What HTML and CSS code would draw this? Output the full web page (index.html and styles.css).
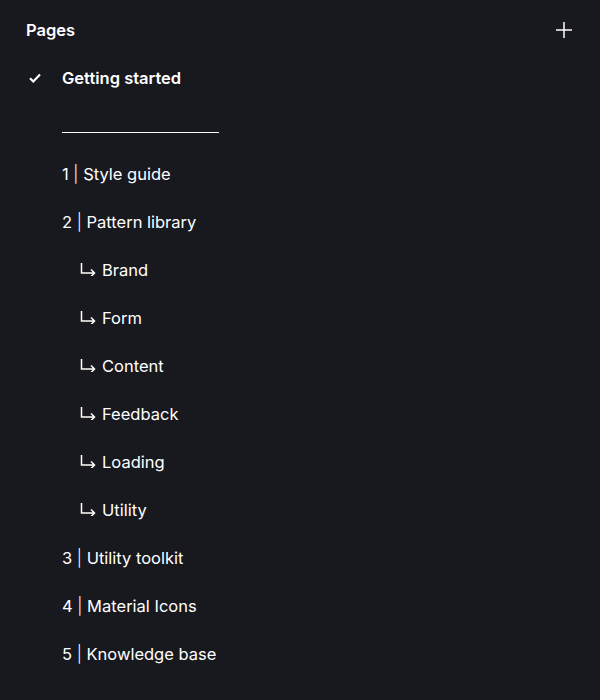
FILE: index.html
```html
<!DOCTYPE html>
<html>
<head>
<meta charset="utf-8">
<link rel="stylesheet" href="styles.css">
</head>
<body>
<div class="panel">
  <div class="header">
    <span class="title">Pages</span>
    <svg class="plus" width="18" height="18" viewBox="0 0 18 18"><path d="M9 1v16M1 9h16" stroke="#fff" stroke-width="1.5" fill="none"/></svg>
  </div>
  <ul class="list">
    <li class="item current">
      <span class="check"><svg width="16" height="16" viewBox="0 0 16 16"><path d="M3 8.3l3.3 3.2 6.7-7" stroke="#fff" stroke-width="2.2" fill="none"/></svg></span>
      <span class="label">Getting started</span>
    </li>
    <li class="item"><span class="sep"></span></li>
    <li class="item"><span class="label">1 <span class="bar">|</span> Style guide</span></li>
    <li class="item"><span class="label">2 <span class="bar">|</span> Pattern library</span></li>
    <li class="item sub"><svg class="arr" width="17" height="14" viewBox="0 0 17 14"><path d="M1.5 1v10h13M11 7.5l3.5 3.5-3.5 3.5" stroke="#fff" stroke-width="1.5" fill="none"/></svg><span class="label">Brand</span></li>
    <li class="item sub"><svg class="arr" width="17" height="14" viewBox="0 0 17 14"><path d="M1.5 1v10h13M11 7.5l3.5 3.5-3.5 3.5" stroke="#fff" stroke-width="1.5" fill="none"/></svg><span class="label">Form</span></li>
    <li class="item sub"><svg class="arr" width="17" height="14" viewBox="0 0 17 14"><path d="M1.5 1v10h13M11 7.5l3.5 3.5-3.5 3.5" stroke="#fff" stroke-width="1.5" fill="none"/></svg><span class="label">Content</span></li>
    <li class="item sub"><svg class="arr" width="17" height="14" viewBox="0 0 17 14"><path d="M1.5 1v10h13M11 7.5l3.5 3.5-3.5 3.5" stroke="#fff" stroke-width="1.5" fill="none"/></svg><span class="label">Feedback</span></li>
    <li class="item sub"><svg class="arr" width="17" height="14" viewBox="0 0 17 14"><path d="M1.5 1v10h13M11 7.5l3.5 3.5-3.5 3.5" stroke="#fff" stroke-width="1.5" fill="none"/></svg><span class="label">Loading</span></li>
    <li class="item sub"><svg class="arr" width="17" height="14" viewBox="0 0 17 14"><path d="M1.5 1v10h13M11 7.5l3.5 3.5-3.5 3.5" stroke="#fff" stroke-width="1.5" fill="none"/></svg><span class="label">Utility</span></li>
    <li class="item"><span class="label">3 <span class="bar">|</span> Utility toolkit</span></li>
    <li class="item"><span class="label">4 <span class="bar">|</span> Material Icons</span></li>
    <li class="item"><span class="label">5 <span class="bar">|</span> Knowledge base</span></li>
  </ul>
</div>
</body>
</html>
```
FILE: styles.css
```css
html, body {
  margin: 0;
  padding: 0;
  background: #18181f;
}
body {
  font-family: Inter, "Noto Sans", sans-serif;
  color: #ffffff;
  width: 600px;
  height: 700px;
  overflow: hidden;
}
.panel {
  padding: 0 0 0 26px;
}
.header {
  display: flex;
  align-items: center;
  justify-content: space-between;
  padding: 18px 27px 12px 0;
  height: 24px;
}
.title {
  font-size: 16.5px;
  font-weight: 600;
  line-height: 24px;
}
.plus {
  display: block;
}
.list {
  list-style: none;
  margin: 0;
  padding: 0;
}
.item {
  position: relative;
  height: 48px;
  display: flex;
  align-items: center;
  padding-left: 36px;
  font-size: 16.5px;
  line-height: 24px;
}
.item.sub {
  padding-left: 54px;
}
.current .label {
  font-weight: 600;
}
.check {
  position: absolute;
  left: 1px;
  top: 16px;
  width: 16px;
  height: 16px;
}
.check svg {
  display: block;
}
.sep {
  display: block;
  width: 157px;
  height: 1px;
  background: #ffffff;
  margin-top: 12px;
}
.bar {
  font-weight: 300;
}
.arr {
  display: block;
  margin: -2px 5px 0 0;
}
```
